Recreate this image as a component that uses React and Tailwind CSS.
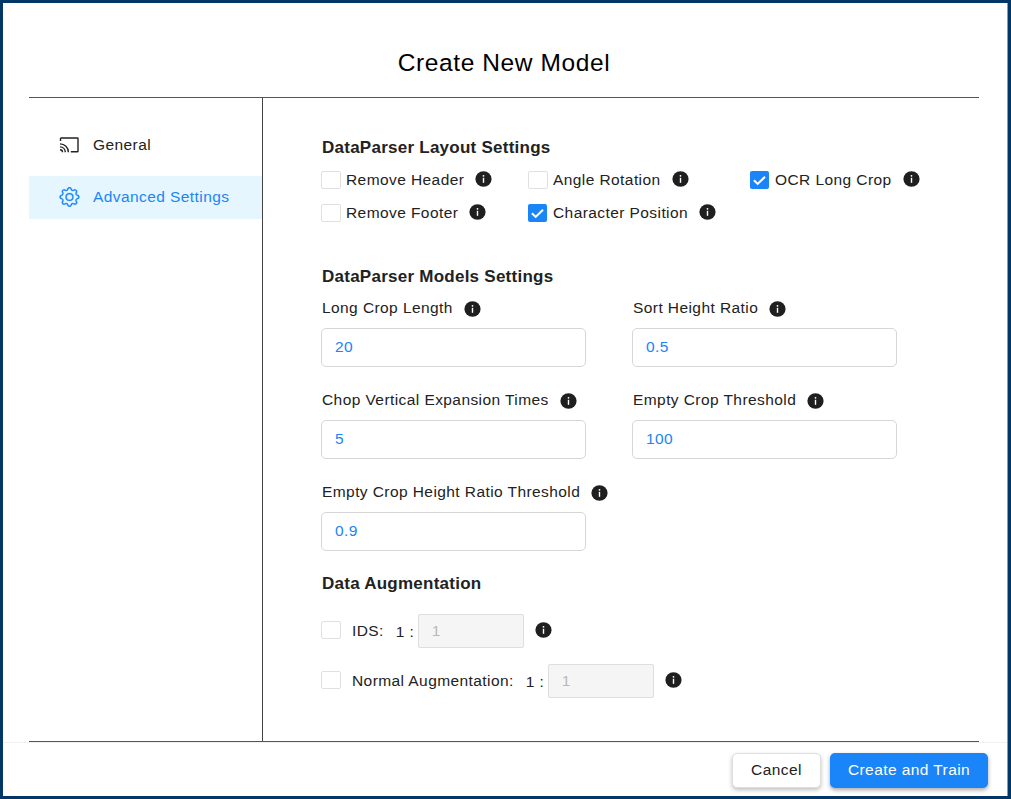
import { BsGear } from "react-icons/bs";

function CastIcon() {
  return (
    <svg viewBox="0 0 20 20" className="h-[20px] w-[20px] shrink-0" fill="none" stroke="#222" strokeWidth="1.4">
      <path d="M1.5 6V3.6Q1.5 3 2.1 3H18.3Q19 3 19 3.6V16.2Q19 16.8 18.3 16.8H11.8" />
      <path d="M1 8.9C5.6 8.9 9.4 12.4 9.4 17.3" />
      <path d="M1 11.9C4 11.9 6.3 14.1 6.3 17.3" />
      <path d="M1 14.7C2.4 14.7 3.5 15.8 3.5 17.3" />
    </svg>
  );
}

function Info({ className = "" }) {
  return (
    <svg viewBox="0 0 17 16" className={`h-4 w-[17px] shrink-0 ${className}`}>
      <ellipse cx="8.5" cy="8" rx="8.1" ry="7.8" fill="#1f1f1f" />
      <circle cx="8.5" cy="4.8" r="0.9" fill="#fff" />
      <path d="M8.5 6.8V11.8" stroke="#fff" strokeWidth="1.4" />
    </svg>
  );
}

function Box({ checked }) {
  return checked ? (
    <span className="flex h-[18px] w-[19px] shrink-0 items-center justify-center rounded-[2px] bg-[#1a85f8]">
      <svg viewBox="0 0 19 18" className="h-[18px] w-[19px]" fill="none" stroke="#fff" strokeWidth="2.1">
        <path d="M3.9 9.3L7.7 12.9L15 5.7" />
      </svg>
    </span>
  ) : (
    <span className="h-[18px] w-[20px] shrink-0 rounded-[2px] border border-[#e0e0e0] bg-white" />
  );
}

function Check({ label, checked }) {
  return (
    <div className="flex h-[33px] items-center">
      <Box checked={checked} />
      <span className={checked ? "ml-[6px]" : "ml-[5px]"}>{label}</span>
      <Info className="-mt-px ml-[11px]" />
    </div>
  );
}

function Field({ label, value }) {
  return (
    <div className="h-[92px]">
      <div className="flex h-[28px] items-center pb-3 pl-px">
        <span>{label}</span>
        <Info className="mt-[2px] ml-[11px]" />
      </div>
      <div className="flex h-[39px] w-[265px] items-center rounded-[5px] border border-[#d6d6d6] pb-[2px] pl-[13px] text-[#1a85f8]">
        {value}
      </div>
    </div>
  );
}

function Ratio({ label }) {
  return (
    <div className="flex h-[50px] items-center">
      <span className="flex pb-[2px]">
        <Box />
      </span>
      <span className="ml-[11px]">{label}</span>
      <span className="mt-px ml-[12px] w-[18px]">1 :</span>
      <span className="ml-[4px] flex h-[34px] w-[106px] items-center rounded-[2px] border border-[#dedede] bg-[#f5f5f5] pl-[13px] text-[#b8b8b8]">
        1
      </span>
      <Info className="-mt-[2px] ml-[11px]" />
    </div>
  );
}

function Heading({ children, className = "" }) {
  return <h2 className={`flex h-6 items-center pl-px text-[17px] font-bold tracking-[0.25px] ${className}`}>{children}</h2>;
}

export default function App() {
  return (
    <div className="flex h-[799px] w-[1011px] flex-col border-[3px] border-[#003767] bg-white font-['Liberation_Sans',Arial,sans-serif] text-[15.5px] leading-5 tracking-[0.42px] whitespace-nowrap text-[#222]">
      <div className="flex min-h-0 flex-1 flex-col border-r border-[#8c9aa8]">
        <header className="mx-[26px] flex h-[95px] w-[950px] shrink-0 items-center justify-center border-b border-[#555] pt-[25px] text-[24.5px] tracking-[0.6px] text-black">
          <h1>Create New Model</h1>
        </header>
        <div className="mx-[26px] flex h-[643px] w-[950px] shrink-0">
          <nav className="w-[234px] border-r border-[#444] pt-[26px]">
            <div className="flex h-[42px] items-center pl-[30px]">
              <CastIcon />
              <span className="ml-[14px]">General</span>
            </div>
            <div className="mt-[10px] flex h-[43px] items-center bg-[#e6f6ff] pb-px pl-[30px] text-[#1a85f8]">
              <BsGear className="h-[20px] w-[21px] stroke-[0.2]" />
              <span className="ml-[13px]">Advanced Settings</span>
            </div>
          </nav>
          <main className="pt-[38px] pl-[58px]">
            <Heading>DataParser Layout Settings</Heading>
            <div className="mt-[3px] grid grid-cols-[207px_222px_200px]">
              <Check label="Remove Header" />
              <Check label="Angle Rotation" />
              <Check label="OCR Long Crop" checked />
              <Check label="Remove Footer" />
              <Check label="Character Position" checked />
            </div>
            <Heading className="mt-[36px]">DataParser Models Settings</Heading>
            <div className="mt-[11px] grid grid-cols-[311px_311px]">
              <Field label="Long Crop Length" value="20" />
              <Field label="Sort Height Ratio" value="0.5" />
              <Field label="Chop Vertical Expansion Times" value="5" />
              <Field label="Empty Crop Threshold" value="100" />
              <Field label="Empty Crop Height Ratio Threshold" value="0.9" />
            </div>
            <Heading className="-mt-[4px]">Data Augmentation</Heading>
            <div className="mt-[10px]">
              <Ratio label="IDS:" />
              <Ratio label="Normal Augmentation:" />
            </div>
          </main>
        </div>
        <div className="mx-[26px] h-px w-[950px] shrink-0 bg-[#555]" />
        <footer className="flex flex-1 justify-end gap-[9px] border-t border-[#f0f0f0] pt-[10px] pr-[19px]">
          <button className="h-[35px] w-[89px] rounded-[5px] border border-[#dedede] bg-white pb-px shadow-[0_2px_4px_rgba(0,0,0,0.25)]">Cancel</button>
          <button className="h-[35px] w-[158px] rounded-[5px] bg-[#1a85f8] pb-px text-white shadow-[0_2px_4px_rgba(0,0,0,0.35)]">Create and Train</button>
        </footer>
      </div>
    </div>
  );
}
